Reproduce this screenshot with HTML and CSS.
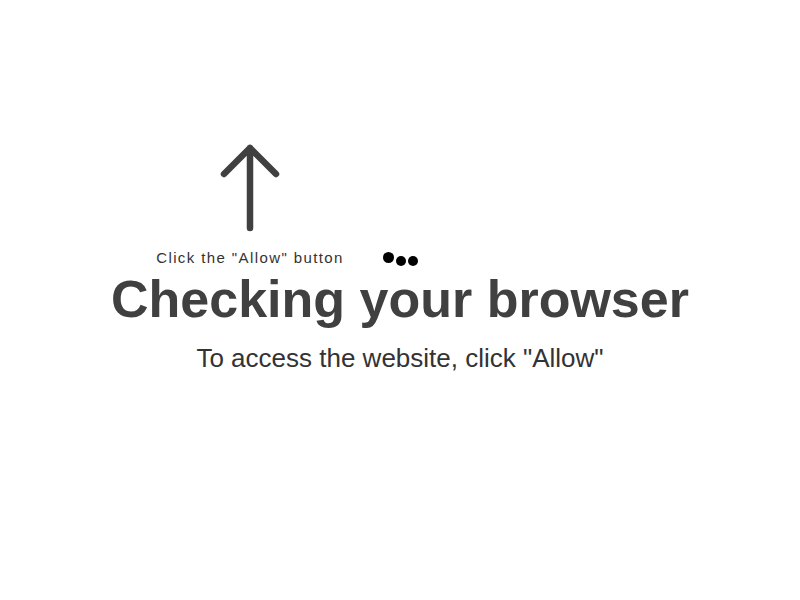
FILE: index.html
```html
<!DOCTYPE html>
<html lang="en">
<head>
<meta charset="utf-8">
<title>Checking your browser</title>
<link rel="stylesheet" href="styles.css">
</head>
<body>
<div class="hint">
  <svg class="arrow" width="64" height="90" viewBox="0 0 64 90">
    <path d="M32 86 V6 M6 32 L32 6 L58 32" fill="none" stroke="#404040" stroke-width="6.5" stroke-linecap="round" stroke-linejoin="round"/>
  </svg>
  <div class="hint-label">Click the "Allow" button</div>
</div>
<main class="main">
  <div class="dots"><span class="dot dot-big"></span><span class="dot"></span><span class="dot"></span></div>
  <h1 class="title">Checking your browser</h1>
  <p class="subtitle">To access the website, click "Allow"</p>
</main>
</body>
</html>
```
FILE: styles.css
```css
html, body {
  margin: 0;
  padding: 0;
  background: #fff;
  font-family: "Liberation Sans", Arial, sans-serif;
}
.main {
  display: flex;
  flex-direction: column;
  align-items: center;
  padding-top: 252px;
}
.dots {
  display: flex;
  align-items: flex-start;
  gap: 2px;
  height: 14px;
}
.dot {
  width: 10px;
  height: 10px;
  border-radius: 50%;
  background: #000;
  margin-top: 4px;
}
.dot-big {
  width: 11px;
  height: 11px;
  margin-top: 0;
}
.title {
  margin: 3px 0 0;
  font-size: 52px;
  line-height: 60px;
  font-weight: 700;
  color: #404040;
}
.subtitle {
  margin: 14px 0 0;
  font-size: 26px;
  line-height: 30px;
  color: #333;
}
.hint {
  position: absolute;
  left: 150px;
  top: 142px;
  width: 200px;
  display: flex;
  flex-direction: column;
  align-items: center;
}
.arrow {
  display: block;
}
.hint-label {
  margin-top: 17px;
  font-size: 15px;
  line-height: 17px;
  letter-spacing: 1.4px;
  color: #333;
  white-space: nowrap;
}
```
